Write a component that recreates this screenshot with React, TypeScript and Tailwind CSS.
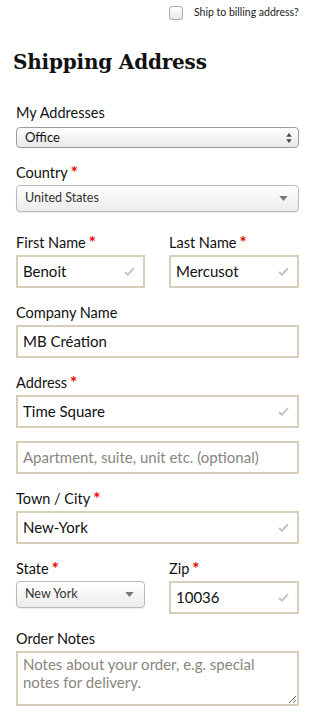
import type { ReactNode } from "react";

const sans = { fontFamily: '"Lato", "Open Sans", sans-serif' };

function Check() {
  return (
    <svg viewBox="0 0 12 10" className="h-[9px] w-[11px] shrink-0 text-[#c4c4c4]" aria-hidden="true">
      <path d="M1 5.5 L4.2 8.5 L11 1.2" fill="none" stroke="currentColor" strokeWidth="2.2" />
    </svg>
  );
}

function Label({ children, required }: { children: ReactNode; required?: boolean }) {
  return (
    <div className="mb-[2px] flex h-[20px] items-center text-[14.5px] text-[#111]">
      <span>{children}</span>
      {required && <span className="ml-[3px] -mt-[2px] text-[17px] font-bold leading-none text-[#e00]">*</span>}
    </div>
  );
}

function TextBox({ value, placeholder, check }: { value?: string; placeholder?: string; check?: boolean }) {
  return (
    <div className="flex h-[33px] items-center border-2 border-[#d8cfba] bg-white pl-[5px] pr-[8px]">
      <input
        readOnly
        defaultValue={value}
        placeholder={placeholder}
        className="w-0 min-w-0 flex-1 bg-transparent text-[15px] text-[#111] outline-none placeholder:text-[#8a8580]"
        style={sans}
      />
      {check && <Check />}
    </div>
  );
}

function Caret() {
  return (
    <svg viewBox="0 0 10 6" className="h-[5px] w-[9px] shrink-0 text-[#777]" aria-hidden="true">
      <path d="M0 0 H10 L5 6 Z" fill="currentColor" />
    </svg>
  );
}

function Dropdown({ value }: { value: string }) {
  return (
    <div className="flex h-[27px] items-center justify-between whitespace-nowrap rounded-[4px] border border-[#b9b9b9] bg-gradient-to-b from-white to-[#ececec] pl-[8px] pr-[10px] text-[12.5px] text-[#333] shadow-[0_1px_1px_rgba(0,0,0,0.08)]">
      <span>{value}</span>
      <Caret />
    </div>
  );
}

export default function App() {
  return (
    <div className="min-h-[717px] w-[321px] bg-white pb-[10px] pl-[16px] pr-[22px]" style={sans}>
      <div className="flex h-[24px] items-center pl-[153px] pt-[1px]">
        <span className="h-[14px] w-[14px] rounded-[3px] border border-[#a9a9a9] bg-gradient-to-b from-white to-[#e6e6e6]" />
        <span className="ml-[11px] text-[10.5px] text-[#222]">Ship to billing address?</span>
      </div>

      <h1
        className="-ml-[3px] mt-[23px] text-[20px] font-bold leading-[30px] tracking-[-0.2px] text-[#111]"
        style={{ fontFamily: '"DejaVu Serif", serif' }}
      >
        Shipping Address
      </h1>

      <div className="mt-[26px]">
        <div className="mb-[4px] flex h-[20px] items-center text-[14.5px] text-[#111]">My Addresses</div>
        <div className="flex h-[21px] items-center justify-between rounded-[4px] border border-[#9d9d9d] bg-gradient-to-b from-white to-[#e9e9e9] pl-[8px] pr-[6px] text-[13px] text-[#111]">
          <span>Office</span>
          <svg viewBox="0 0 6 11" className="h-[10px] w-[6px] text-[#444]" aria-hidden="true">
            <path d="M0 4 L3 0 L6 4 Z M0 7 L6 7 L3 11 Z" fill="currentColor" />
          </svg>
        </div>
      </div>

      <div className="mt-[15px]">
        <Label required>Country</Label>
        <Dropdown value="United States" />
      </div>

      <div className="mt-[21px] flex gap-[24px]">
        <div className="w-[129px] shrink-0">
          <Label required>First Name</Label>
          <TextBox value="Benoit" check />
        </div>
        <div className="min-w-0 flex-1">
          <Label required>Last Name</Label>
          <TextBox value="Mercusot" check />
        </div>
      </div>

      <div className="mt-[15px]">
        <Label>Company Name</Label>
        <TextBox value="MB Création" />
      </div>

      <div className="mt-[15px]">
        <Label required>Address</Label>
        <TextBox value="Time Square" check />
        <div className="mt-[13px]">
          <TextBox placeholder="Apartment, suite, unit etc. (optional)" />
        </div>
      </div>

      <div className="mt-[15px]">
        <Label required>Town / City</Label>
        <TextBox value="New-York" check />
      </div>

      <div className="mt-[15px] flex items-start gap-[24px]">
        <div className="w-[129px] shrink-0">
          <Label required>State</Label>
          <Dropdown value="New York" />
        </div>
        <div className="min-w-0 flex-1">
          <Label required>Zip</Label>
          <TextBox value="10036" check />
        </div>
      </div>

      <div className="mt-[15px]">
        <Label>Order Notes</Label>
        <textarea
          readOnly
          placeholder="Notes about your order, e.g. special notes for delivery."
          className="block h-[55px] w-full border-2 border-[#d8cfba] bg-white px-[5px] pt-[2px] text-[15px] leading-[18px] text-[#111] outline-none placeholder:text-[#8a8580]"
          style={sans}
        />
      </div>
    </div>
  );
}
